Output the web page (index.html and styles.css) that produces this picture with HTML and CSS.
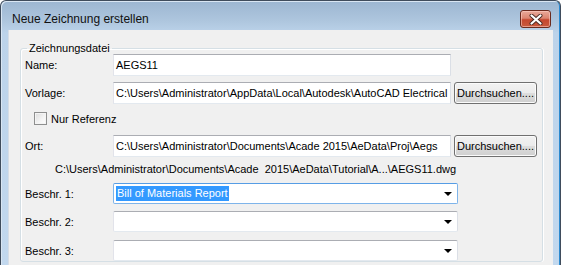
FILE: index.html
```html
<!DOCTYPE html>
<html>
  <head lang="de">
    <meta charset="UTF-8" />
    <title>Neue Zeichnung erstellen</title>
    <link rel="stylesheet" href="styles.css">
  </head>

  <body>
    <div class="window">
      <div class="titlebar">
        <div class="title">Neue Zeichnung erstellen</div>
        <div class="close" title="Schließen">
          <svg width="14" height="11" viewBox="0 0 14 11">
            <path d="M2.5 1.5 L11.5 9.5 M11.5 1.5 L2.5 9.5" stroke="#4a2a24" stroke-width="4" stroke-linecap="round" />
            <path d="M2.5 1.5 L11.5 9.5 M11.5 1.5 L2.5 9.5" stroke="#ffffff" stroke-width="2.2" stroke-linecap="round" />
          </svg>
        </div>
      </div>
      <div class="client">
        <fieldset class="group">
          <legend>Zeichnungsdatei</legend>

          <div class="row row_name">
            <div class="lbl">Name:</div>
            <div class="edit">AEGS11</div>
          </div>

          <div class="row row_vorlage">
            <div class="lbl">Vorlage:</div>
            <div class="edit">C:\Users\Administrator\AppData\Local\Autodesk\AutoCAD Electrical</div>
            <div class="btn">Durchsuchen....</div>
          </div>

          <div class="row row_check">
            <div class="check"></div>
            <div class="check_lbl">Nur Referenz</div>
          </div>

          <div class="row row_ort">
            <div class="lbl">Ort:</div>
            <div class="edit">C:\Users\Administrator\Documents\Acade 2015\AeData\Proj\Aegs</div>
            <div class="btn">Durchsuchen....</div>
          </div>

          <div class="path">C:\Users\Administrator\Documents\Acade  2015\AeData\Tutorial\A...\AEGS11.dwg</div>

          <div class="row row_b1">
            <div class="lbl">Beschr. 1:</div>
            <div class="combo focus">
              <span class="sel">Bill of Materials Report</span>
              <span class="arrow"></span>
            </div>
          </div>

          <div class="row row_b2">
            <div class="lbl">Beschr. 2:</div>
            <div class="combo">
              <span class="sel"></span>
              <span class="arrow"></span>
            </div>
          </div>

          <div class="row row_b3">
            <div class="lbl">Beschr. 3:</div>
            <div class="combo">
              <span class="sel"></span>
              <span class="arrow"></span>
            </div>
          </div>
        </fieldset>
      </div>
    </div>
  </body>
</html>
```

FILE: styles.css
```css
body {
  margin: 0;
  padding: 0;
  background: #ffffff;
  font-family: "Liberation Sans", Arial, sans-serif;
  font-size: 11px;
  color: #000000;
}

.window {
  width: 559px;
  height: 264px;
  border: 1px solid #3f4c5c;
  border-bottom: none;
  border-radius: 6px 6px 0 0;
  overflow: hidden;
  background: linear-gradient(to bottom, #9cb6d1 0px, #aec6de 20px, #bcd3ea 32px, #c2d8ee 100%);
  box-shadow: inset 1px 1px 0 #d9e6f3, inset -1px 0 0 #2b8ad0;
}

.titlebar {
  height: 29px;
  display: flex;
  justify-content: space-between;
  align-items: flex-start;
  padding-right: 9px;
}

.title {
  font-size: 12px;
  line-height: 14px;
  padding-top: 11px;
  padding-left: 11px;
  color: #111111;
}

.close {
  margin-top: 9px;
  width: 29px;
  height: 16px;
  border: 1px solid #6b2a1e;
  border-radius: 3px;
  background: linear-gradient(to bottom, #e9a99a 0%, #dc8571 45%, #c5472f 55%, #c95a3e 100%);
  box-shadow: inset 0 0 0 1px rgba(255, 210, 200, 0.55);
  display: flex;
  align-items: center;
  justify-content: center;
}

.close svg {
  display: block;
}

.client {
  margin: 0 7px;
  height: 240px;
  background: #f0f0f0;
  box-shadow: inset 1px 0 0 #d6dde6;
  padding-top: 12px;
}

.group {
  margin: 0 10px 0 12px;
  padding: 0 0 0 4px;
  border: 1px solid #d5dfe5;
  border-radius: 3px;
  box-shadow: 1px 0 0 #ffffff, inset 1px 1px 0 #ffffff;
}

.group legend {
  padding: 0 2px;
  margin-left: 2px;
  line-height: 12px;
}

.row {
  display: flex;
  align-items: center;
}

.lbl {
  width: 88px;
  flex: none;
}

.edit {
  width: 334px;
  height: 20px;
  line-height: 20px;
  padding-left: 2px;
  background: #ffffff;
  border: 1px solid #e3e9ef;
  border-top-color: #abadb3;
  border-left-color: #e2e3ea;
  border-right-color: #dbdfe6;
  white-space: nowrap;
  overflow: hidden;
}

.btn {
  margin-left: 3px;
  width: 81px;
  height: 20px;
  line-height: 20px;
  text-align: center;
  border: 1px solid #707070;
  border-radius: 3px;
  background: linear-gradient(to bottom, #f2f2f2 0%, #ebebeb 50%, #dddddd 51%, #cfcfcf 100%);
  box-shadow: inset 0 0 0 1px #fbfbfb;
}

.row_name {
  margin-top: 0;
}

.row_vorlage {
  margin-top: 6px;
}

.row_check {
  margin-top: 8px;
  padding-left: 9px;
  height: 13px;
}

.check {
  width: 11px;
  height: 11px;
  border: 1px solid #8e8f8f;
  background: linear-gradient(135deg, #dcdcdc 0%, #f4f4f4 60%, #ffffff 100%);
  box-shadow: inset 0 0 0 1px #f4f4f4;
}

.check_lbl {
  margin-left: 4px;
}

.row_ort {
  margin-top: 10px;
}

.path {
  margin-top: 6px;
  padding-left: 30px;
  line-height: 13px;
  white-space: pre;
}

.combo {
  width: 336px;
  height: 19px;
  background: #ffffff;
  border: 1px solid #e3e9ef;
  border-top-color: #abadb3;
  border-left-color: #e2e3ea;
  border-right-color: #dbdfe6;
  border-radius: 2px;
  display: flex;
  align-items: center;
  justify-content: space-between;
  padding: 0 5px 0 2px;
}

.combo.focus {
  border-color: #7eb4ea;
  border-top-color: #569de5;
}

.sel {
  background: #3399ff;
  color: #ffffff;
  line-height: 15px;
  padding: 0 1px;
}

.arrow {
  width: 0;
  height: 0;
  border-left: 4px solid transparent;
  border-right: 4px solid transparent;
  border-top: 4px solid #000000;
}

.row_b1 {
  margin-top: 7px;
}

.row_b2 {
  margin-top: 7px;
}

.row_b3 {
  margin-top: 8px;
}
```
